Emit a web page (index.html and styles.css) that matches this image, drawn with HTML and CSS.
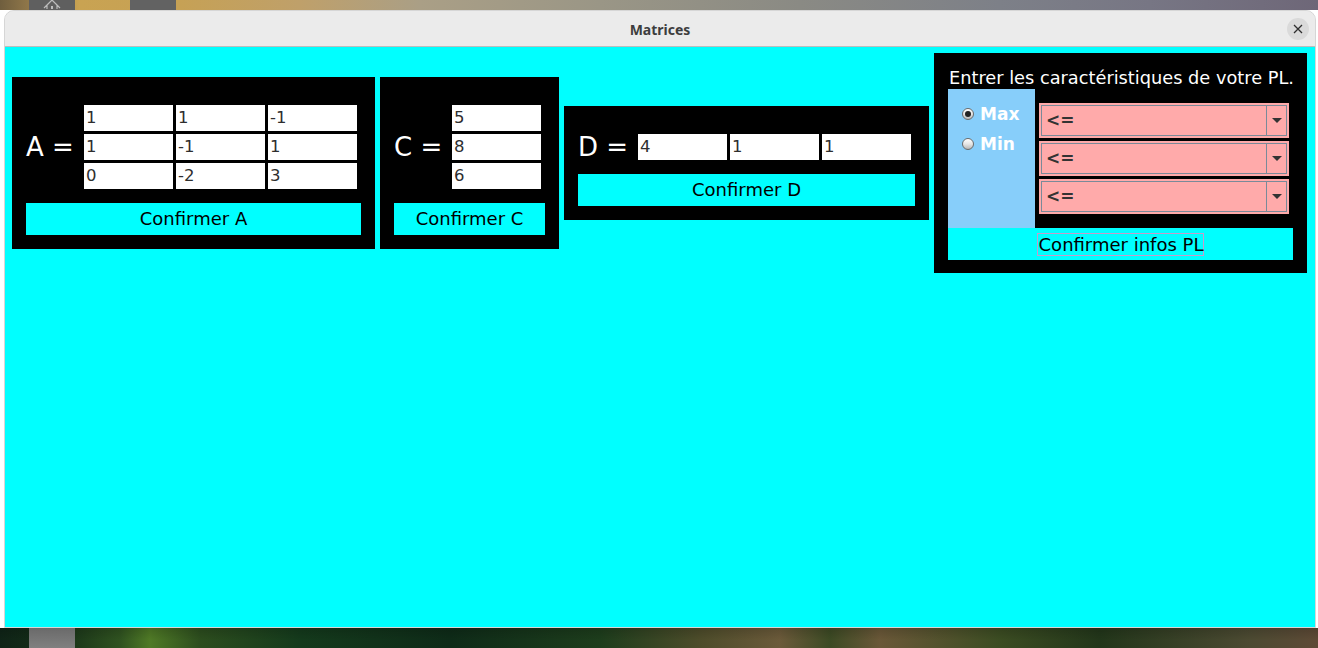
FILE: index.html
```html
<!DOCTYPE html>
<html lang="fr">
<head>
<meta charset="utf-8">
<title>Matrices</title>
<link rel="stylesheet" href="styles.css">
</head>
<body>
<div class="desktop">
  <div class="strip strip-top">
    <div class="dock-item dock-first">
      <svg class="home" width="20" height="10" viewBox="0 0 20 10"><path d="M2 9 L10 1 L18 9 M5 6 V10 M15 6 V10" fill="none" stroke="#bdbdbd" stroke-width="1.2"/><rect x="9" y="7" width="2" height="3" fill="#bdbdbd"/></svg>
    </div>
    <div class="dock-item dock-second"></div>
  </div>

  <div class="window">
    <div class="titlebar">
      <span></span>
      <span class="title">Matrices</span>
      <span class="close"><svg width="10" height="10" viewBox="0 0 10 10"><path d="M1 1 L9 9 M9 1 L1 9" stroke="#2e2e2e" stroke-width="1.3" fill="none"/></svg></span>
    </div>
    <div class="content">
      <div class="row">
        <div class="panel">
          <div class="eq">
            <span class="label">A =</span>
            <div class="grid cols3">
              <div class="field">1</div><div class="field">1</div><div class="field">-1</div>
              <div class="field">1</div><div class="field">-1</div><div class="field">1</div>
              <div class="field">0</div><div class="field">-2</div><div class="field">3</div>
            </div>
          </div>
          <button class="btn">Confirmer A</button>
        </div>

        <div class="panel">
          <div class="eq">
            <span class="label">C =</span>
            <div class="grid cols1">
              <div class="field">5</div>
              <div class="field">8</div>
              <div class="field">6</div>
            </div>
          </div>
          <button class="btn">Confirmer C</button>
        </div>

        <div class="panel">
          <div class="eq">
            <span class="label label-wide">D =</span>
            <div class="grid cols3">
              <div class="field">4</div><div class="field">1</div><div class="field">1</div>
            </div>
          </div>
          <button class="btn">Confirmer D</button>
        </div>

        <div class="panel-pl">
          <div class="pl-title">Entrer les caractéristiques de votre PL.</div>
          <div class="pl-body">
            <div class="pl-radios">
              <div class="radio-row"><span class="radio checked"></span><span class="radio-text">Max</span></div>
              <div class="radio-row"><span class="radio"></span><span class="radio-text">Min</span></div>
            </div>
            <div class="pl-combos">
              <div class="combo"><div class="combo-inner"><span class="combo-text">&lt;=</span><span class="combo-arrow"></span></div></div>
              <div class="combo"><div class="combo-inner"><span class="combo-text">&lt;=</span><span class="combo-arrow"></span></div></div>
              <div class="combo"><div class="combo-inner"><span class="combo-text">&lt;=</span><span class="combo-arrow"></span></div></div>
            </div>
          </div>
          <button class="btn btn-pl"><span class="focus">Confirmer infos PL</span></button>
        </div>
      </div>
    </div>
  </div>

  <div class="strip strip-bottom">
    <div class="dock-item dock-bottom"></div>
  </div>
</div>
</body>
</html>
```

FILE: styles.css
```css
* { box-sizing: border-box; }

html, body {
  margin: 0;
  padding: 0;
}

body {
  width: 1318px;
  height: 648px;
  overflow: hidden;
  font-family: "DejaVu Sans", "Liberation Sans", sans-serif;
}

.desktop {
  width: 1318px;
  height: 648px;
  display: flex;
  flex-direction: column;
}

.strip {
  display: flex;
  flex: none;
}

.strip-top {
  height: 10px;
  background: linear-gradient(90deg, #6f5e3e 0px, #8c7448 25px, #c9a352 80px, #c6a155 180px, #bfa06a 300px, #aa9f86 420px, #9a9686 600px, #8a8a84 800px, #7d8088 1000px, #777684 1150px, #6e6778 1318px);
}

.strip-bottom {
  height: 20px;
  background:
    linear-gradient(180deg, rgba(0,0,0,0.15), rgba(0,0,0,0) 60%),
    linear-gradient(90deg, #0f2417 0px, #163018 60px, #2f5220 120px, #4f7a26 150px, #2c4d1e 200px, #143a1c 300px, #0e2b18 450px, #1d3d1c 600px, #4d4c2a 700px, #6b5a3a 780px, #3c4a24 830px, #6a5838 880px, #3b4c22 1000px, #22361a 1100px, #4c4a32 1250px, #5e4a36 1318px);
}

.dock-item {
  width: 46px;
  height: 100%;
  background: #5f5f5f;
}

.dock-first {
  margin-left: 29px;
  display: flex;
  justify-content: center;
}

.home {
  display: block;
  margin-top: -1px;
}

.dock-second {
  margin-left: 55px;
  background: #626262;
}

.dock-bottom {
  margin-left: 29px;
  background: linear-gradient(180deg, #6a6a6a, #808080);
}

.window {
  margin-left: 4px;
  width: 1312px;
  height: 618px;
  flex: none;
  border: 1px solid #d6d6d6;
  border-radius: 10px 10px 0 0;
  background: #ebebeb;
  display: flex;
  flex-direction: column;
  overflow: hidden;
}

.titlebar {
  height: 36px;
  flex: none;
  display: grid;
  grid-template-columns: 1fr auto 1fr;
  align-items: center;
  background: #ebebeb;
  border-bottom: 1px solid #bcbcbc;
}

.title {
  font-family: "Noto Sans", "DejaVu Sans", sans-serif;
  font-weight: 700;
  font-size: 14px;
  color: #3d3d3d;
  padding-top: 1px;
}

.close {
  justify-self: end;
  margin-right: 6px;
  width: 22px;
  height: 22px;
  border-radius: 50%;
  background: #dadada;
  display: flex;
  align-items: center;
  justify-content: center;
}

.close svg { display: block; }

.content {
  flex: 1;
  background: #00ffff;
}

.row {
  display: flex;
  justify-content: flex-start;
  align-items: center;
  gap: 5px;
  padding-top: 6px;
  padding-left: 7px;
}

.panel {
  background: #000;
  padding: 28px 14px 14px 14px;
  display: flex;
  flex-direction: column;
  gap: 14px;
}

.eq {
  display: flex;
  align-items: center;
  gap: 10px;
  padding-right: 4px;
}

.label {
  color: #fff;
  font-size: 26px;
  line-height: 26px;
  white-space: nowrap;
  width: 48px;
  flex: none;
}

.label-wide { width: 50px; }

.grid {
  display: grid;
  gap: 3px;
}

.cols3 { grid-template-columns: repeat(3, 89px); }
.cols1 { grid-template-columns: 89px; }

.field {
  height: 26px;
  background: #fff;
  color: #2e2e2e;
  font-size: 16.5px;
  line-height: 26px;
  padding-left: 2px;
}

.btn {
  display: block;
  width: 100%;
  height: 32px;
  border: none;
  margin: 0;
  padding: 0;
  background: #00ffff;
  color: #000;
  font-family: "DejaVu Sans", sans-serif;
  font-size: 18px;
  line-height: 32px;
  text-align: center;
}

.panel-pl {
  background: #000;
  padding: 14px 14px 13px 14px;
  display: flex;
  flex-direction: column;
  width: 373px;
}

.pl-title {
  color: #fff;
  font-size: 17.75px;
  line-height: 22px;
  height: 22px;
  white-space: nowrap;
  padding-left: 1px;
}

.pl-body {
  display: flex;
  height: 139px;
}

.pl-radios {
  width: 87px;
  background: #87cefa;
  padding-top: 10px;
  display: flex;
  flex-direction: column;
  align-items: center;
}

.radio-row {
  height: 30px;
  display: flex;
  align-items: center;
  width: 59px;
}

.radio {
  width: 12px;
  height: 12px;
  border-radius: 50%;
  border: 1px solid #6b6b6b;
  background: linear-gradient(180deg, #ffffff 0%, #e6e6e6 50%, #b8b8b8 100%);
  position: relative;
  flex: none;
}

.radio.checked::after {
  content: "";
  position: absolute;
  left: 2px;
  top: 2px;
  width: 6px;
  height: 6px;
  border-radius: 50%;
  background: #222;
}

.radio-text {
  margin-left: 6px;
  color: #fff;
  font-weight: 700;
  font-size: 17px;
  line-height: 20px;
}

.pl-combos {
  width: 258px;
  padding: 0 4px;
  display: flex;
  flex-direction: column;
  justify-content: center;
  gap: 3px;
}

.combo {
  height: 35px;
  border: 2px solid #ffaaaa;
  background: #ffaaaa;
}

.combo-inner {
  height: 100%;
  border: 1px solid #7a8a99;
  display: flex;
}

.combo-text {
  flex: 1;
  padding-left: 4px;
  color: #333;
  font-weight: 700;
  font-size: 17px;
  line-height: 29px;
}

.combo-arrow {
  width: 20px;
  border-left: 1px solid #7a8a99;
  display: flex;
  align-items: center;
  justify-content: center;
}

.combo-arrow::after {
  content: "";
  width: 0;
  height: 0;
  border-left: 5px solid transparent;
  border-right: 5px solid transparent;
  border-top: 5px solid #333;
}

.btn-pl {
  display: flex;
  align-items: center;
  justify-content: center;
}

.focus {
  border: 1px solid #c99ac9;
  line-height: 21px;
  padding: 0 0 0 1px;
}
```
